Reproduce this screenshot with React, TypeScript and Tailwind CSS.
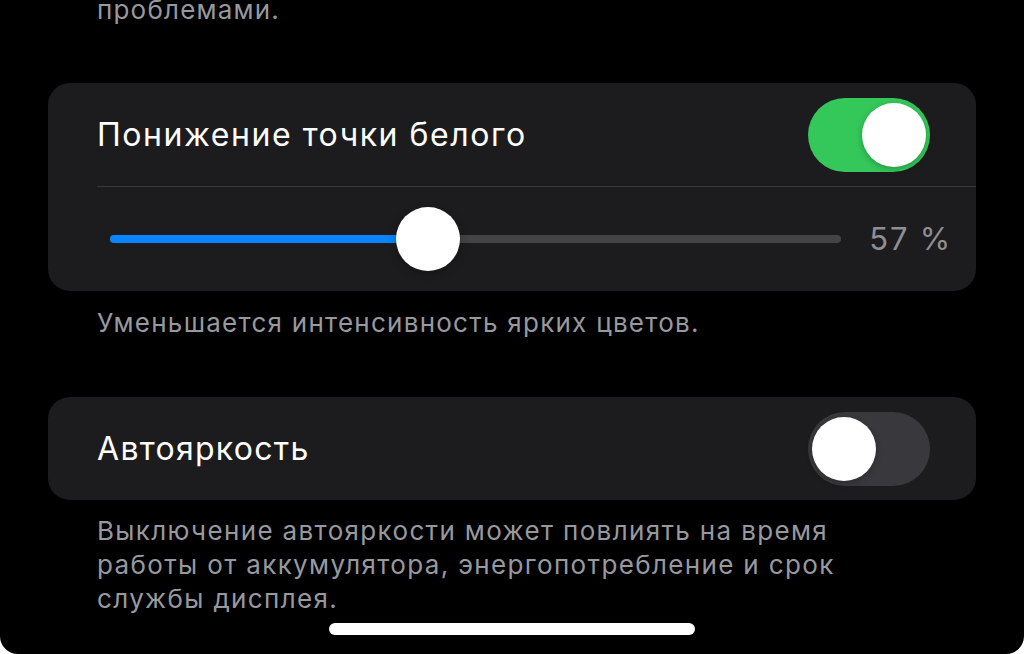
import React from "react";

const font = { fontFamily: 'Inter, "Liberation Sans", Arial, sans-serif' };

function Toggle({ on }: { on: boolean }) {
  return (
    <div
      className={`flex h-[74px] w-[122px] items-center rounded-full px-[4px] ${
        on ? "justify-end bg-[#34c759]" : "justify-start bg-[#39393d]"
      }`}
    >
      <div className="h-[64px] w-[64px] rounded-full bg-white shadow-[0_2px_6px_rgba(0,0,0,0.25)]" />
    </div>
  );
}

export default function App() {
  const value = 57;
  return (
    <div className="h-[654px] w-[1024px] bg-white" style={font}>
      <div className="relative flex h-[654px] w-[1024px] flex-col overflow-hidden rounded-b-[18px] bg-black">
        <p className="mt-[-7px] pl-[97px] text-[26px] leading-[34px] tracking-[1.2px] text-[#98989f]">
          проблемами.
        </p>

        {/* White point card */}
        <div className="mx-[48px] mt-[56px] rounded-[22px] bg-[#1c1c1e]">
          <div className="flex h-[103px] items-center justify-between pl-[49px] pr-[46px]">
            <span className="text-[32px] tracking-[1.55px] text-white">Понижение точки белого</span>
            <Toggle on />
          </div>
          <div className="ml-[49px] h-px bg-[#38383a]" />
          <div className="flex h-[104px] items-center pl-[62px] pr-[24px]">
            <div className="relative h-[8px] flex-1 rounded-full bg-[#444446]">
              <div className="h-full w-[318px] rounded-full bg-[#0a84ff]" />
              <div className="absolute left-[286px] top-1/2 h-[64px] w-[64px] -translate-y-1/2 rounded-full bg-white shadow-[0_2px_8px_rgba(0,0,0,0.3)]" />
            </div>
            <span className="ml-[28px] text-[31px] tracking-[1.8px] text-[#8e8e93]">{value} %</span>
          </div>
        </div>
        <p className="mt-[15px] pl-[97px] text-[26px] leading-[34px] tracking-[1.25px] text-[#98989f]">
          Уменьшается интенсивность ярких цветов.
        </p>

        {/* Auto-brightness card */}
        <div className="mx-[48px] mt-[57px] flex h-[103px] items-center justify-between rounded-[22px] bg-[#1c1c1e] pl-[49px] pr-[46px]">
          <span className="text-[32px] tracking-[1.3px] text-white">Автояркость</span>
          <Toggle on={false} />
        </div>
        <p className="mt-[14px] w-[870px] pl-[97px] text-[26px] leading-[34px] tracking-[1.35px] text-[#98989f]">
          Выключение автояркости может повлиять на время работы от аккумулятора, энергопотребление и срок службы дисплея.
        </p>

        <div className="absolute left-[329px] top-[623px] h-[12px] w-[366px] rounded-full bg-white" />
      </div>
    </div>
  );
}
